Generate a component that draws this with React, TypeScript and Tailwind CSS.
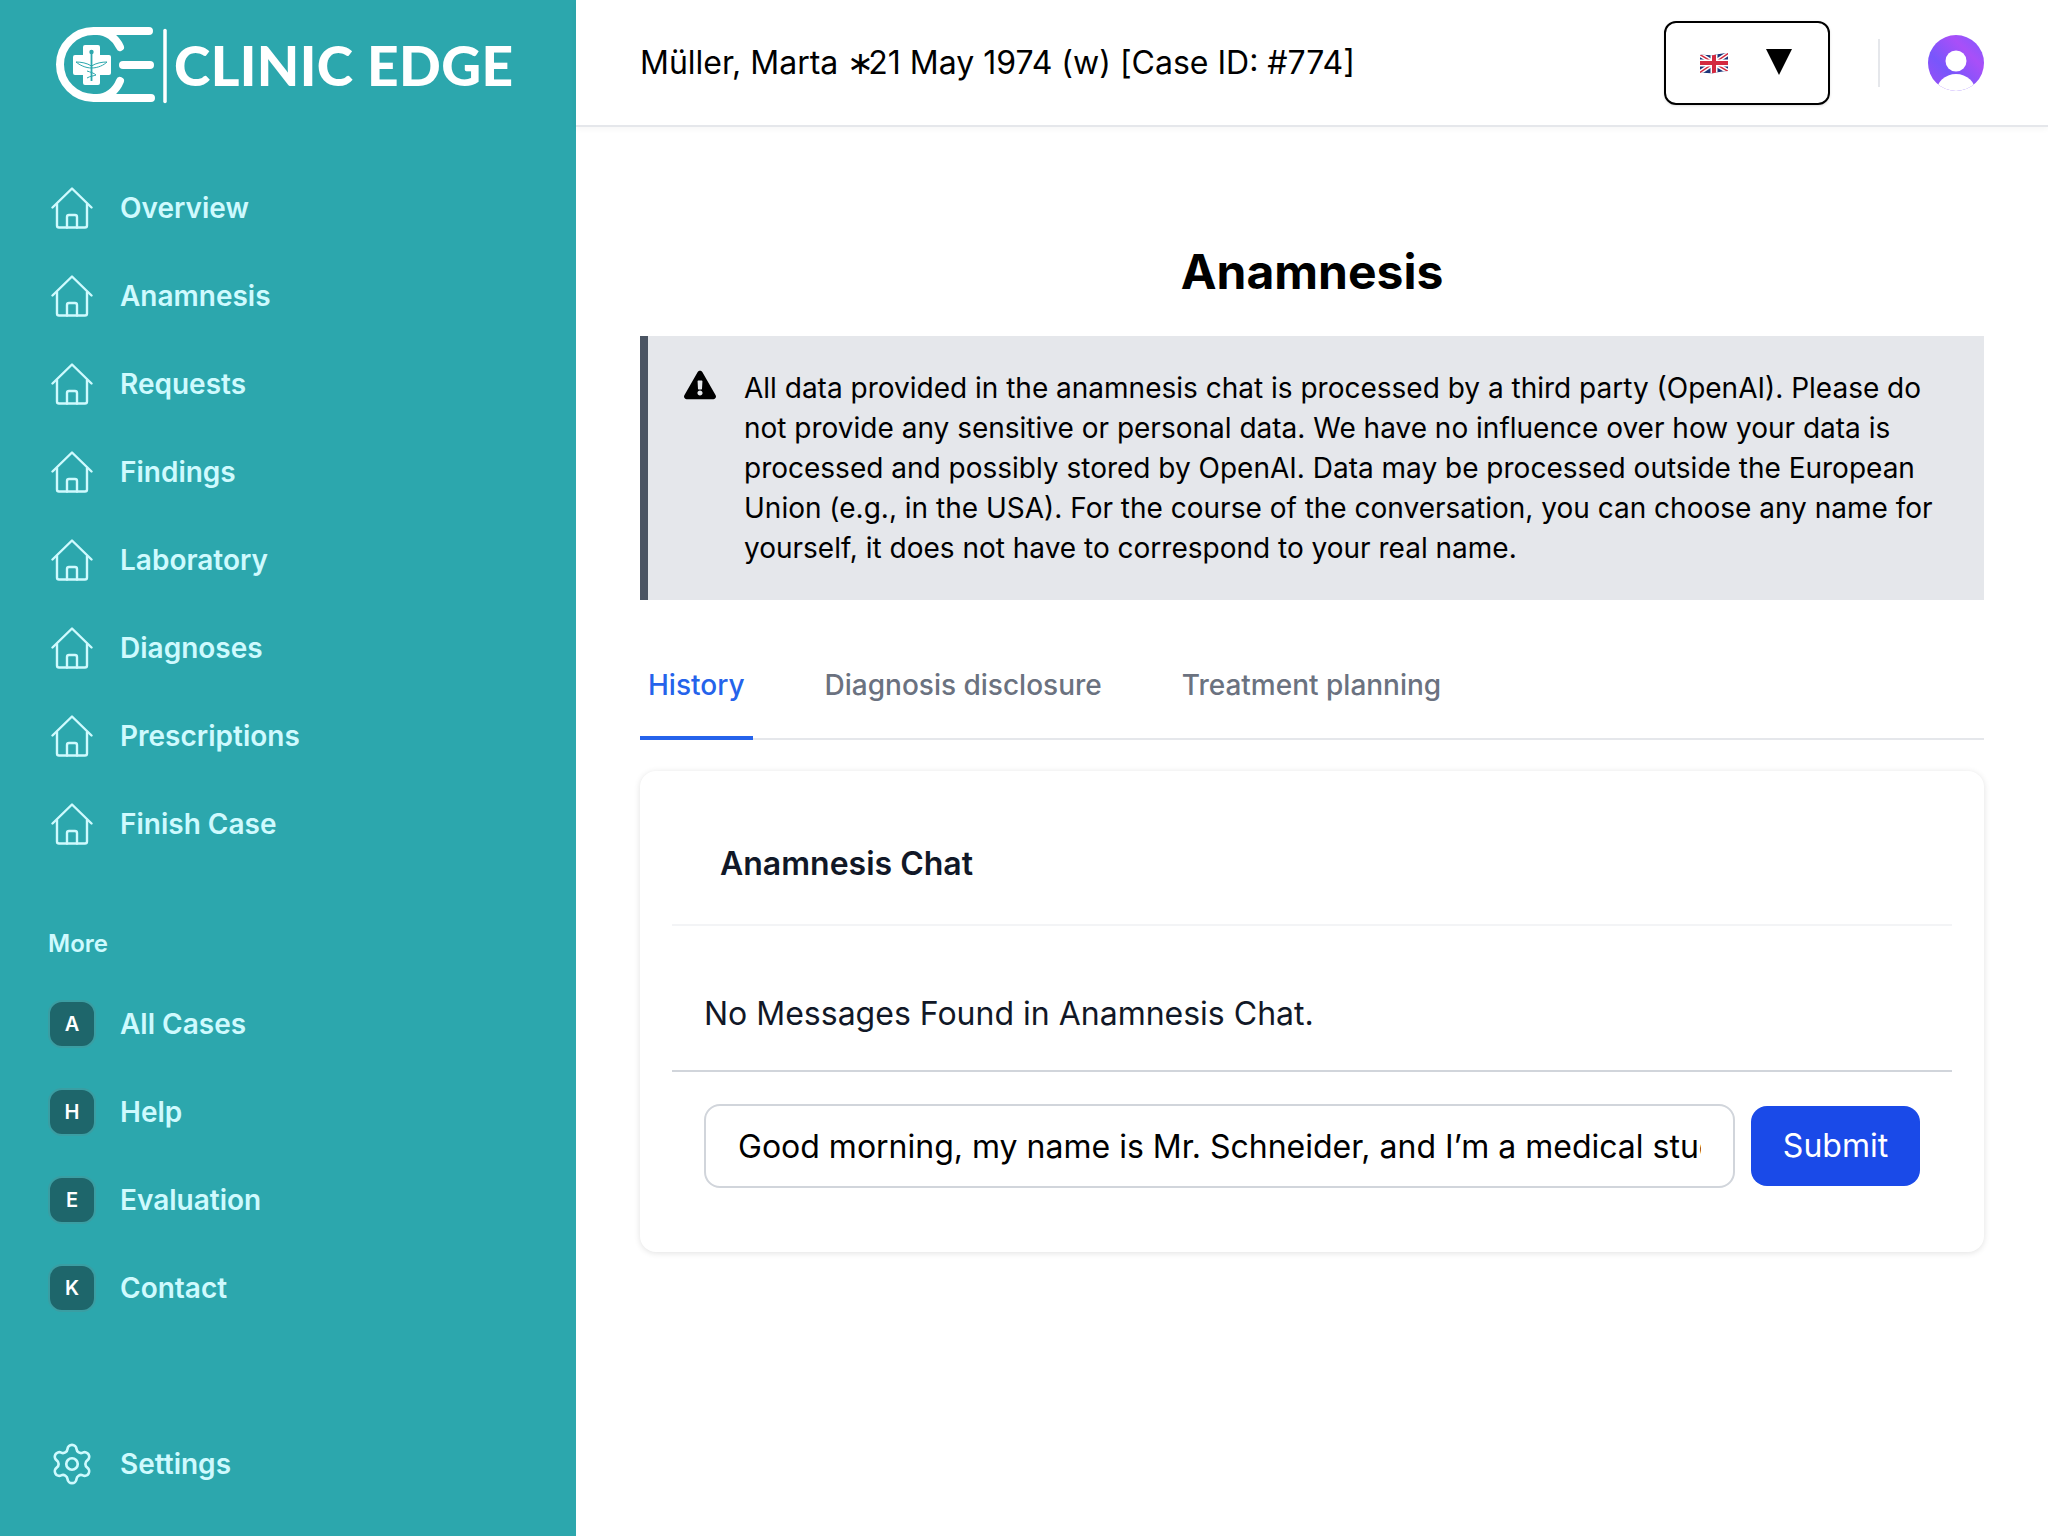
import { Settings } from "lucide-react";
import { FaExclamationTriangle } from "react-icons/fa";

const mainLinks = ["Overview", "Anamnesis", "Requests", "Findings", "Laboratory", "Diagnoses", "Prescriptions", "Finish Case"];

const moreLinks = [
  { letter: "A", label: "All Cases" },
  { letter: "H", label: "Help" },
  { letter: "E", label: "Evaluation" },
  { letter: "K", label: "Contact" },
];

function HouseIcon() {
  return (
    <svg width="42" height="42" viewBox="0 0 42 42" fill="none" stroke="#cffafe" strokeWidth="2.400" strokeLinecap="round" strokeLinejoin="round" className="shrink-0">
      <path d="M1.500 20.500 21 1.500l19.500 19" />
      <path d="M6 17v21.500a2 2 0 0 0 2 2h26a2 2 0 0 0 2-2V17" />
      <path d="M16 40.500V30a2 2 0 0 1 2-2h6a2 2 0 0 1 2 2v10.500" />
    </svg>
  );
}

function LogoMark() {
  return (
    <svg width="116" height="80" viewBox="0 0 116 80" fill="none" className="shrink-0">
      <g stroke="#ffffff" strokeWidth="8" strokeLinecap="round">
        <path d="M97 6H41.500A33.500 33.500 0 0 0 41.500 73H99" />
        <path d="M45 6c10 0 19 7 23 16" />
        <path d="M45 73c10 0 19-7 23-17" />
        <path d="M71 40h27" />
      </g>
      <path d="M33 20h13a2 2 0 0 1 2 2v8h9a2 2 0 0 1 2 2v16a2 2 0 0 1-2 2h-9v8a2 2 0 0 1-2 2H33a2 2 0 0 1-2-2v-8h-8a2 2 0 0 1-2-2V32a2 2 0 0 1 2-2h8v-8a2 2 0 0 1 2-2z" fill="#ffffff" />
      <g stroke="#2ca7ad" fill="none">
        <path d="M39.500 27v29" strokeWidth="1.800" />
        <path d="M24 37c5 0 11 1 15.500 4 4.500-3 10.500-4 15.500-4-3 3-9 6-15.500 6-6 0-12-3-15.500-6z" strokeWidth="1" />
        <path d="M35 46c3 1 7 2 9 4-2 1-6 1-9 3" strokeWidth="1" />
      </g>
      <circle cx="39.500" cy="27" r="2.200" fill="#2ca7ad" />
      <path d="M113 5.500v71" stroke="#ffffff" strokeWidth="3.500" strokeLinecap="round" />
    </svg>
  );
}

function FlagIcon() {
  return (
    <svg width="30" height="22" viewBox="0 0 30 22" className="shrink-0">
      <defs>
        <clipPath id="wave">
          <path d="M1 3c5-1 9 1 14 0s9-2 14-2v18c-5 0-9 1-14 2S6 20 1 21z" />
        </clipPath>
      </defs>
      <g clipPath="url(#wave)">
        <rect width="30" height="22" fill="#1c3578" />
        <path d="M0 2 30 20M30 1 0 21" stroke="#ffffff" strokeWidth="4.500" />
        <path d="M0 2 30 20M30 1 0 21" stroke="#d3293f" strokeWidth="1.500" />
        <path d="M15 0v22M0 11h30" stroke="#ffffff" strokeWidth="7" />
        <path d="M15 0v22M0 11h30" stroke="#d3293f" strokeWidth="4" />
      </g>
    </svg>
  );
}

function AvatarIcon() {
  return (
    <svg width="56" height="56" viewBox="0 0 56 56" className="shrink-0">
      <defs>
        <linearGradient id="avatar" x1="0" y1="1" x2="1" y2="0">
          <stop offset="0" stopColor="#a04df5" />
          <stop offset="0.35" stopColor="#7856fb" />
          <stop offset="0.7" stopColor="#a94ff8" />
          <stop offset="1" stopColor="#7a5cff" />
        </linearGradient>
        <clipPath id="avatarClip">
          <circle cx="28" cy="28" r="28" />
        </clipPath>
      </defs>
      <circle cx="28" cy="28" r="28" fill="url(#avatar)" />
      <circle cx="28" cy="26" r="10.500" fill="#ffffff" />
      <ellipse cx="28" cy="58" rx="20" ry="19" fill="#ffffff" clipPath="url(#avatarClip)" />
    </svg>
  );
}

export default function App() {
  return (
    <div className="flex h-screen w-full overflow-hidden bg-white font-['Inter',sans-serif]">
      <aside className="flex h-full w-[576px] shrink-0 flex-col bg-[#2ca7ad] text-[#cffafe]">
        <div className="flex h-[164px] items-start pl-[52px] pt-[25px]">
          <LogoMark />
          <span className="ml-[6px] mt-[4px] whitespace-nowrap font-['Lato',sans-serif] text-[55px] font-black leading-[72px] tracking-[0.4px] text-white">
            CLINIC EDGE
          </span>
        </div>

        <nav className="flex flex-col">
          {mainLinks.map((link) => (
            <a key={link} className="flex h-[88px] items-center pl-[51px] text-[28px] font-semibold">
              <span className="w-[69px]">
                <HouseIcon />
              </span>
              {link}
            </a>
          ))}
        </nav>

        <div className="mt-[60px] pl-[48px] text-[24px] font-semibold leading-[32px]">More</div>

        <nav className="mt-[20px] flex flex-col">
          {moreLinks.map((link) => (
            <a key={link.label} className="flex h-[88px] items-center pl-[48px] text-[28px] font-semibold">
              <span className="mr-[24px] flex h-[48px] w-[48px] items-center justify-center rounded-[14px] border-2 border-[#3a9ea3] bg-[#1e666b] text-[20px] font-semibold text-white">
                {link.letter}
              </span>
              {link.label}
            </a>
          ))}
        </nav>

        <a className="mt-auto mb-[28px] flex h-[88px] items-center pl-[49px] text-[28px] font-semibold">
          <span className="w-[71px]">
            <Settings size={46} strokeWidth={1.4} />
          </span>
          Settings
        </a>
      </aside>

      <div className="flex min-w-0 flex-1 flex-col">
        <header className="flex h-[127px] shrink-0 items-center justify-between border-b-2 border-[#e5e7eb] pl-[64px] pr-[64px] shadow-[0_2px_6px_rgba(0,0,0,0.04)]">
          <span className="text-[32px] leading-[40px] text-black">
            Müller, Marta <span className="tracking-[-6px]">∗</span>21 May 1974 (w) [Case ID: #774]
          </span>
          <div className="flex items-center">
            <div className="flex h-[84px] w-[166px] items-center rounded-[12px] border-2 border-black pl-[33px] shadow-sm">
              <FlagIcon />
              <svg width="28" height="28" viewBox="0 0 28 28" className="ml-[36px] mt-[-2px]">
                <polygon points="1,1 27,1 14,27" fill="#000000" />
              </svg>
            </div>
            <div className="ml-[48px] h-[48px] w-[2px] bg-[#e5e7eb]" />
            <div className="ml-[48px]">
              <AvatarIcon />
            </div>
          </div>
        </header>

        <main className="flex flex-col px-[64px]">
          <h1 className="mt-[121px] text-center text-[48px] font-bold leading-[48px] text-black">Anamnesis</h1>

          <div className="mt-[40px] flex border-l-8 border-[#4b5563] bg-[#e5e7eb] py-[32px] pl-[34px] pr-[40px]">
            <span className="mt-[1px] w-[62px] shrink-0 pl-[2px] text-[32px] text-black">
              <FaExclamationTriangle />
            </span>
            <p className="text-[28px] leading-[40px] text-black">
              All data provided in the anamnesis chat is processed by a third party (OpenAI). Please do not provide any sensitive or personal data. We have no influence over how your data is processed and possibly stored by OpenAI. Data may be processed outside the European Union (e.g., in the USA). For the course of the conversation, you can choose any name for yourself, it does not have to correspond to your real name.
            </p>
          </div>

          <div className="mt-[40px] flex h-[100px] gap-[64px] border-b-2 border-[#e5e7eb] text-[28px] font-medium text-[#6b7280]">
            <button className="mb-[-2px] border-b-4 border-[#2563eb] px-[8px] pb-[6px] font-medium text-[#2563eb]">History</button>
            <button className="mb-[-2px] border-b-4 border-transparent px-[8px] pb-[6px] font-medium">Diagnosis disclosure</button>
            <button className="mb-[-2px] border-b-4 border-transparent px-[8px] pb-[6px] font-medium">Treatment planning</button>
          </div>

          <section className="mt-[31px] rounded-[16px] bg-white px-[32px] pb-[64px] shadow-[0_1px_6px_rgba(0,0,0,0.12)]">
            <div className="flex h-[155px] items-center border-b-2 border-[#f3f4f6] pl-[48px] pt-[32px]">
              <h2 className="text-[32px] font-semibold leading-[40px] text-[#111827]">Anamnesis Chat</h2>
            </div>
            <div className="flex h-[146px] items-center border-b-2 border-[#d1d5db] pl-[32px] pt-[32px] text-[32px] text-[#111827]">
              No Messages Found in Anamnesis Chat.
            </div>
            <div className="mt-[32px] flex items-center gap-[16px] pl-[32px] pr-[32px]">
              <input
                readOnly
                value="Good morning, my name is Mr. Schneider, and I’m a medical student"
                className="h-[84px] w-[1031px] rounded-[16px] border-2 border-[#d1d5db] px-[32px] text-[32px] text-black outline-none"
              />
              <button className="flex h-[80px] w-[169px] items-center justify-center rounded-[16px] bg-[#1a4ae8] text-[32px] text-white">
                Submit
              </button>
            </div>
          </section>
        </main>
      </div>
    </div>
  );
}
